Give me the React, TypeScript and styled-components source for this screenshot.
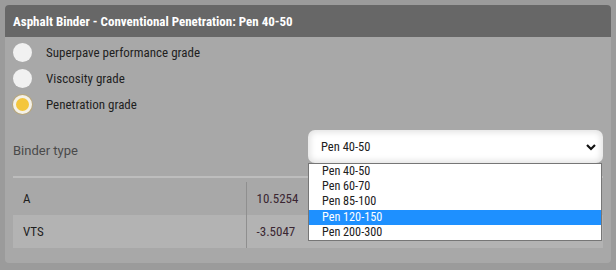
import React from 'react';
import styled, { createGlobalStyle } from 'styled-components';

const GlobalStyle = createGlobalStyle`
  html, body {
    margin: 0;
    padding: 0;
    background-color: #9b9b9b;
    font-family: Roboto, "Liberation Sans", Arial, sans-serif;
  }
`;

const narrow = `"Roboto Condensed", "Liberation Sans Narrow", Roboto, sans-serif`;

const Page = styled.div`
  padding: 5px 5px 7px 5px;
`;

const Card = styled.section`
  background-color: #a8a8a8;
  border-radius: 4px;
  height: 258px;
  box-sizing: border-box;
`;

const Header = styled.header`
  height: 32px;
  display: flex;
  align-items: center;
  padding: 0 8px;
  background-color: #676767;
  border-radius: 4px 4px 0 0;
  color: #ffffff;
  font-family: ${narrow};
  font-stretch: 87.5%;
  font-weight: 700;
  font-size: 13px;
`;

const Body = styled.div`
  padding: 2px 8px 0 8px;
`;

const RadioList = styled.div`
  display: flex;
  flex-direction: column;
`;

const RadioRow = styled.div`
  height: 26px;
  display: flex;
  align-items: center;
  gap: 14px;
  font-family: ${narrow};
  font-stretch: 87.5%;
  font-size: 13px;
  color: #1f1f1f;
`;

const RadioDot = styled.span<{ $checked?: boolean }>`
  width: 19px;
  height: 19px;
  box-sizing: border-box;
  border-radius: 50%;
  background-color: ${({ $checked }) => ($checked ? '#f4c63d' : '#f1f1f1')};
  border: ${({ $checked }) => ($checked ? '3px solid #f4f1e8' : 'none')};
  box-shadow: ${({ $checked }) => ($checked ? '0 0 0 1px #b9a77a' : 'none')};
  flex-shrink: 0;
`;

const FieldRow = styled.div`
  margin-top: 13px;
  display: flex;
  align-items: center;
  justify-content: space-between;
  padding-bottom: 13px;
  border-bottom: 2px solid #bdbdbd;
`;

const FieldLabel = styled.span`
  font-size: 13px;
  color: #4a4a4a;
  padding-top: 8px;
`;

const SelectWrap = styled.div`
  position: relative;
  width: 295px;
`;

const SelectBox = styled.div`
  height: 33px;
  box-sizing: border-box;
  background-color: #ffffff;
  border-radius: 7px;
  box-shadow: inset 0 0 6px 2px rgba(0, 0, 0, 0.12);
  display: flex;
  align-items: center;
  justify-content: space-between;
  padding: 0 6px 0 13px;
  font-family: ${narrow};
  font-stretch: 87.5%;
  font-size: 12.5px;
  color: #202020;
`;

const Chevron = styled.svg`
  width: 12px;
  height: 12px;
`;

const OptionList = styled.ul`
  position: absolute;
  top: 33px;
  left: 0;
  width: 294px;
  box-sizing: border-box;
  margin: 0;
  padding: 0;
  list-style: none;
  background-color: #ffffff;
  border: 1px solid #767676;
  z-index: 2;
`;

const Option = styled.li<{ $active?: boolean }>`
  height: 15.2px;
  line-height: 15.2px;
  padding-left: 13px;
  font-family: ${narrow};
  font-stretch: 87.5%;
  font-size: 12.2px;
  background-color: ${({ $active }) => ($active ? '#1e90ff' : 'transparent')};
  color: ${({ $active }) => ($active ? '#ffffff' : '#202020')};
`;

const Table = styled.table`
  margin-top: 4px;
  width: 100%;
  table-layout: fixed;
  border-collapse: collapse;
  font-family: ${narrow};
  font-stretch: 87.5%;
  font-size: 13px;
`;

const Row = styled.tr<{ $shaded?: boolean }>`
  height: 33px;
  background-color: ${({ $shaded }) => ($shaded ? '#b3b3b3' : 'transparent')};
`;

const NameCell = styled.td`
  width: 233px;
  box-sizing: border-box;
  padding: 0 10px;
  color: #1f1f1f;
`;

const ValueCell = styled.td`
  padding: 0 10px;
  border-left: 1px solid #8f8f8f;
  color: #3a2632;
`;

const options = ['Pen 40-50', 'Pen 60-70', 'Pen 85-100', 'Pen 120-150', 'Pen 200-300'];

export default function App() {
  return (
    <>
      <GlobalStyle />
      <Page>
        <Card>
          <Header>Asphalt Binder - Conventional Penetration: Pen 40-50</Header>
          <Body>
            <RadioList>
              <RadioRow><RadioDot />Superpave performance grade</RadioRow>
              <RadioRow><RadioDot />Viscosity grade</RadioRow>
              <RadioRow><RadioDot $checked />Penetration grade</RadioRow>
            </RadioList>

            <FieldRow>
              <FieldLabel>Binder type</FieldLabel>
              <SelectWrap>
                <SelectBox>
                  <span>Pen 40-50</span>
                  <Chevron viewBox="0 0 12 12">
                    <path d="M2 4 L6 8 L10 4" fill="none" stroke="#111" strokeWidth="2.2" />
                  </Chevron>
                </SelectBox>
                <OptionList>
                  {options.map((o) => (
                    <Option key={o} $active={o === 'Pen 120-150'}>{o}</Option>
                  ))}
                </OptionList>
              </SelectWrap>
            </FieldRow>

            <Table>
              <tbody>
                <Row>
                  <NameCell>A</NameCell>
                  <ValueCell>10.5254</ValueCell>
                </Row>
                <Row $shaded>
                  <NameCell>VTS</NameCell>
                  <ValueCell>-3.5047</ValueCell>
                </Row>
              </tbody>
            </Table>
          </Body>
        </Card>
      </Page>
    </>
  );
}
